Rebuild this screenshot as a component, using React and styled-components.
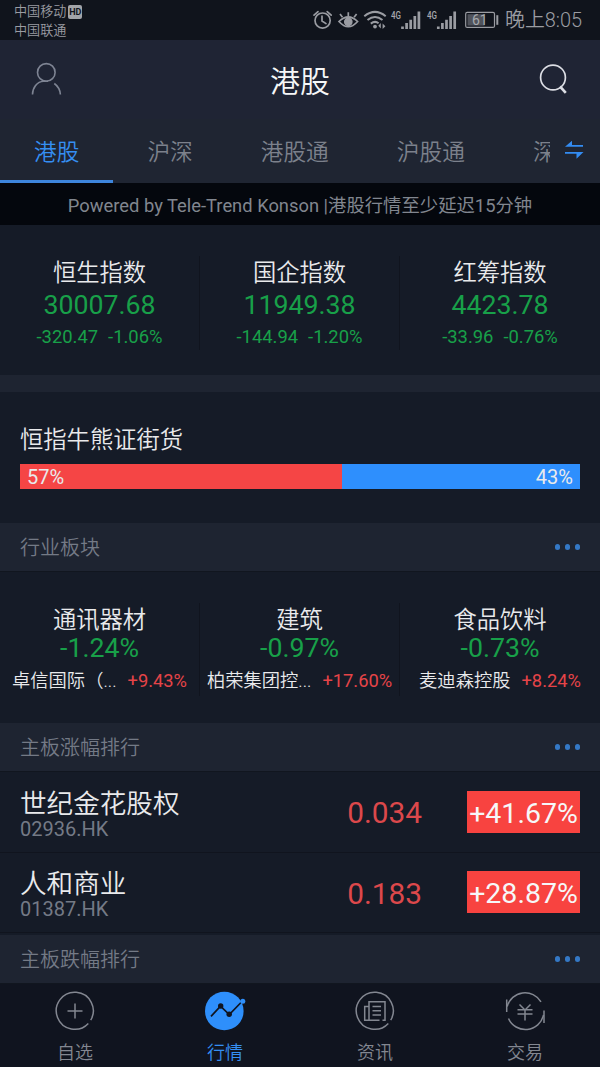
import styled, { createGlobalStyle } from 'styled-components';
import { useState } from 'react';


const indexes = [
    { name: '恒生指数', value: '30007.68', change: '-320.47', percent: '-1.06%' },
    { name: '国企指数', value: '11949.38', change: '-144.94', percent: '-1.20%' },
    { name: '红筹指数', value: '4423.78', change: '-33.96', percent: '-0.76%' },
];

const sectors = [
    { name: '通讯器材', percent: '-1.24%', stock: '卓信国际（...', gain: '+9.43%' },
    { name: '建筑', percent: '-0.97%', stock: '柏荣集团控...', gain: '+17.60%' },
    { name: '食品饮料', percent: '-0.73%', stock: '麦迪森控股', gain: '+8.24%' },
];

const stocks = [
    { name: '世纪金花股权', code: '02936.HK', price: '0.034', gain: '+41.67%' },
    { name: '人和商业', code: '01387.HK', price: '0.183', gain: '+28.87%' },
];

const tabs = ['港股', '沪深', '港股通', '沪股通', '深股通'];

const bull = 57.5;


const StatusIcons = () => (
    <svg width="200" height="40" viewBox="300 0 200 40" fill="none" stroke="#9a9ca2" strokeWidth="1.7">
        {/* alarm */}
        <circle cx="322.6" cy="20.6" r="7.6" />
        <path d="M322 16.2v4.8l4 2.6M314 15.2l4-3.6M331.200 15.200l-4-3.600" strokeLinecap="round" />
        {/* eye */}
        <path d="M339 21.500Q348.300 12.500 357.600 21.500Q348.300 32 339 21.500Z" />
        <circle cx="348.300" cy="21.800" r="3.500" fill="#9a9ca2" />
        <path d="M348.300 12.200v4M340 14l2.500 3.200M356.600 14l-2.500 3.200" />
        {/* wifi */}
        <path d="M364.300 16.200Q375 7.500 385.700 16.200M367.500 20Q375 14 382.500 20M370.800 23.600Q375 20.400 378.600 23.200" strokeWidth="2" />
        <circle cx="375" cy="26.600" r="1.900" fill="#9a9ca2" stroke="none" />
        <path d="M380.800 23v5.500l-2.500-2.800zM382.600 29v-5.500l2.800 2.800z" fill="#9a9ca2" stroke="none" />
        {/* signal bars */}
        {[401.200, 437].map((x) => (
            <path key={x} strokeWidth="2.700" d={`M${x + 1.300} 29v-2.500m4.100 2.500v-6m4.100 6v-9.300m4.100 9.300v-13m4.100 13v-17.500`} />
        ))}
        {/* battery */}
        <rect x="465.700" y="12.400" width="28.800" height="15" rx="1.500" strokeWidth="1.200" />
        <rect x="467.500" y="14.200" width="17" height="11.400" fill="#50535b" stroke="none" />
        <path d="M497.300 15.200v9.600" strokeWidth="2" />
        <g fill="#a6a8ad" stroke="none" fontFamily="Roboto, sans-serif">
            <text x="391" y="18.900" fontSize="11" fontWeight="500" textLength="10" lengthAdjust="spacingAndGlyphs">4G</text>
            <text x="427" y="18.900" fontSize="11" fontWeight="500" textLength="10" lengthAdjust="spacingAndGlyphs">4G</text>
            <text x="472" y="25.200" fontSize="14" fontWeight="400">61</text>
        </g>
    </svg>
);

const UserIcon = () => (
    <svg width="32" height="36" viewBox="0 0 32 36" fill="none" stroke="#7e8493" strokeWidth="1.600">
        <ellipse cx="16.300" cy="11.400" rx="8.800" ry="8.800" />
        <path d="M2.500 33.500C2.500 27 7 20.500 13.500 20.200H18M24.300 22.500Q29.900 26.500 30.400 33.500" />
    </svg>
);

const SearchIcon = () => (
    <svg width="30" height="34" viewBox="0 0 30 34" fill="none" stroke="#dcdee4">
        <circle cx="15" cy="15.500" r="12.400" strokeWidth="1.700" />
        <path d="M22 24.500l5.800 6.300" strokeWidth="2.600" />
    </svg>
);

const SwapIcon = () => (
    <svg width="20" height="20" viewBox="0 0 20 20" fill="#338cf2">
        <path d="M1 6.700L8 .8v4.100h11v1.800zM19.500 11.900L12.500 18.800v-5.100H1v-1.800z" />
    </svg>
);

const PlusIcon = () => (
    <svg width="44" height="44" viewBox="0 0 44 44" fill="none" stroke="#838791" strokeWidth="1.500">
        <path d="M35.300 34.400A18.500 18.500 0 1 1 37.700 31.200" />
        <path d="M22 14.500v15M14.500 22h15" />
    </svg>
);

const ChartIcon = () => (
    <svg width="44" height="44" viewBox="0 0 44 44">
        <circle cx="21.300" cy="22" r="19.300" fill="#2e8ffb" />
        <path d="M8 27.400L17.500 17.200L26.300 25.500L38 13.500" fill="none" stroke="#10141f" strokeWidth="1.700" />
        <circle cx="17.700" cy="17" r="2.700" fill="#10141f" />
        <circle cx="26.200" cy="25.300" r="2.700" fill="#10141f" />
        <circle cx="39.800" cy="12.200" r="2.500" fill="#2e8ffb" />
    </svg>
);

const NewsIcon = () => (
    <svg width="44" height="44" viewBox="0 0 44 44" fill="none" stroke="#838791" strokeWidth="1.500">
        <path d="M35.300 34.400A18.500 18.500 0 1 1 37.700 31.200" />
        <path d="M26.500 31.200H11.700V17.500H16M16 31V12.700H32V31.200H29.500M19.500 17.600H28M19.500 21.800H28M19.500 26H28" />
    </svg>
);

const TradeIcon = () => (
    <svg width="44" height="44" viewBox="0 0 44 44" fill="none" stroke="#838791" strokeWidth="1.500">
        <path d="M4.200 17.500A18.500 18.500 0 0 1 38 12.800M5.500 29.500A18.500 18.500 0 0 0 40.500 26" />
        <path d="M3.700 23V10.500M41 21.500V34" />
        <path d="M16.500 15.500L22 21L27.500 15.500M22 21V31.500M14.500 20.800H29.500M14.500 25H29.500" />
    </svg>
);

const navItems = [
    { label: '自选', icon: <PlusIcon /> },
    { label: '行情', icon: <ChartIcon /> },
    { label: '资讯', icon: <NewsIcon /> },
    { label: '交易', icon: <TradeIcon /> },
];


const Section = ({ title }) => (
    <SectionBar>
        <span>{title}</span>
        <Dots>
            <Dot />
            <Dot />
            <Dot />
        </Dots>
    </SectionBar>
);


const App = () => {

    const [tab, setTab] = useState('港股');
    const [page, setPage] = useState('行情');

    return (
        <Screen>
            <GlobalStyle />

            <StatusBar>
                <Carriers>
                    <Carrier>中国移动<HdBadge>HD</HdBadge></Carrier>
                    <Carrier>中国联通</Carrier>
                </Carriers>
                <StatusIcons />
                <Clock>晚上8:05</Clock>
            </StatusBar>

            <Header>
                <UserIcon />
                <Title>港股</Title>
                <SearchIcon />
            </Header>

            <TabBar>
                <TabList>
                    {tabs.map((name) => (
                        <Tab key={name} $active={name === tab} onClick={() => setTab(name)}>{name}</Tab>
                    ))}
                </TabList>
                <SwapBox><SwapIcon /></SwapBox>
            </TabBar>

            <Notice>Powered by Tele-Trend Konson |港股行情至少延迟15分钟</Notice>

            <IndexGrid>
                {indexes.map((item) => (
                    <Cell key={item.name}>
                        <CellName>{item.name}</CellName>
                        <IndexValue>{item.value}</IndexValue>
                        <IndexChange>
                            <span>{item.change}</span>
                            <span>{item.percent}</span>
                        </IndexChange>
                    </Cell>
                ))}
            </IndexGrid>

            <Divider />

            <BullBear>
                <BullBearTitle>恒指牛熊证街货</BullBearTitle>
                <Bar>
                    <Bull style={{ width: `${bull}%` }}>57%</Bull>
                    <Bear>43%</Bear>
                </Bar>
            </BullBear>

            <Section title="行业板块" />
            <SectorGrid>
                {sectors.map((item) => (
                    <Cell key={item.name}>
                        <CellName>{item.name}</CellName>
                        <SectorValue>{item.percent}</SectorValue>
                        <Leader>
                            <StockLabel>{item.stock}</StockLabel>
                            <Gain>{item.gain}</Gain>
                        </Leader>
                    </Cell>
                ))}
            </SectorGrid>

            <Section title="主板涨幅排行" />
            <StockList>
                {stocks.map((item) => (
                    <StockRow key={item.code}>
                        <div>
                            <StockName>{item.name}</StockName>
                            <StockCode>{item.code}</StockCode>
                        </div>
                        <Price>{item.price}</Price>
                        <Badge>{item.gain}</Badge>
                    </StockRow>
                ))}
            </StockList>

            <Section title="主板跌幅排行" />

            <BottomNav>
                {navItems.map((item) => (
                    <NavItem key={item.label} $active={item.label === page} onClick={() => setPage(item.label)}>
                        {item.icon}
                        <span>{item.label}</span>
                    </NavItem>
                ))}
            </BottomNav>
        </Screen>
    );
};


const GlobalStyle = createGlobalStyle`
    * {
        box-sizing: border-box;
    }

    body {
        margin: 0;
        background: #151b27;
    }
`;

const Screen = styled.div`
    display: flex;
    flex-direction: column;
    width: 600px;
    height: 1067px;
    overflow: hidden;
    background: #151b27;
    color: #e9eaec;
    font-family: Roboto, "Noto Sans CJK SC", sans-serif;
    font-weight: 400;
    white-space: nowrap;
`;

const StatusBar = styled.div`
    display: flex;
    flex: none;
    height: 40px;
    background: #10141c;
    color: #9a9ca2;
`;

const Carriers = styled.div`
    width: 300px;
    padding: 2px 0 0 14px;
`;

const Carrier = styled.div`
    display: flex;
    align-items: center;
    height: 19px;
    font-size: 13.1px;
    font-weight: 350;
    line-height: 19px;
`;

const HdBadge = styled.span`
    width: 14px;
    height: 14px;
    margin-left: 2px;
    border-radius: 2px;
    background: #a2a4a9;
    color: #10141c;
    font-size: 9px;
    font-weight: 700;
    line-height: 14px;
    text-align: center;
`;

const Clock = styled.div`
    padding-left: 5px;
    font-size: 19.900px;
    font-weight: 350;
    line-height: 42px;
`;

const Header = styled.div`
    display: flex;
    flex: none;
    height: 79px;
    align-items: center;
    justify-content: space-between;
    padding: 0 32px 1px 30px;
    background: #1f2434;
`;

const Title = styled.div`
    color: #f6f7f8;
    font-size: 30px;
    font-weight: 350;
    line-height: 40px;
    padding-top: 6px;
`;

const TabBar = styled.div`
    display: flex;
    flex: none;
    height: 64px;
    background: #1f2532;
`;

const TabList = styled.div`
    display: flex;
    width: 550px;
    overflow: hidden;
`;

const Tab = styled.div`
    flex: none;
    height: 64px;
    padding: 0 34px;
    border-bottom: 3px solid ${props => props.$active ? '#3d85dc' : 'transparent'};
    color: ${props => props.$active ? '#358ff3' : '#7c818c'};
    font-size: 22.700px;
    font-weight: 350;
    line-height: 67px;
    cursor: pointer;
`;

const SwapBox = styled.div`
    padding: 21px 0 0 14px;
`;

const Notice = styled.div`
    flex: none;
    height: 42px;
    background: #04070d;
    color: #81868f;
    font-size: 18.350px;
    line-height: 45px;
    text-align: center;
`;

const Grid = styled.div`
    display: grid;
    flex: none;
    grid-template-columns: repeat(3, 200px);
`;

const IndexGrid = styled(Grid)`
    height: 150px;
    padding: 31px 0 30px;
`;

const SectorGrid = styled(Grid)`
    height: 151px;
    padding: 31px 0;
`;

const Cell = styled.div`
    display: flex;
    flex-direction: column;
    align-items: center;
    min-width: 0;

    &:not(:last-child) {
        border-right: 1px solid #10141e;
    }
`;

const CellName = styled.div`
    height: 33px;
    font-size: 23.300px;
    font-weight: 350;
    line-height: 35px;
`;

const IndexValue = styled.div`
    height: 34px;
    color: #18a049;
    font-size: 26.700px;
    line-height: 33px;
`;

const IndexChange = styled.div`
    display: flex;
    gap: 10px;
    color: #18a049;
    font-size: 18.400px;
    line-height: 27px;
`;

const SectorValue = styled.div`
    height: 30px;
    color: #18a049;
    font-size: 26.700px;
    line-height: 25px;
`;

const Leader = styled.div`
    display: flex;
    gap: 11px;
    font-size: 18.300px;
    line-height: 30px;
`;

const StockLabel = styled.span`
    font-weight: 350;
`;

const Gain = styled.span`
    color: #e54448;
`;

const Divider = styled.div`
    flex: none;
    height: 17px;
    background: #1e2431;
`;

const BullBear = styled.div`
    flex: none;
    height: 131px;
    padding: 31px 20px 0;
`;

const BullBearTitle = styled.div`
    height: 41px;
    font-size: 23.300px;
    font-weight: 350;
    line-height: 34px;
`;

const Bar = styled.div`
    display: flex;
    height: 25px;
    font-size: 20px;
    line-height: 26px;
`;

const Bull = styled.div`
    padding-left: 7px;
    background: #f54545;
`;

const Bear = styled.div`
    flex: 1;
    padding-right: 7px;
    background: #2e8ffd;
    text-align: right;
`;

const SectionBar = styled.div`
    display: flex;
    flex: none;
    height: 49px;
    align-items: center;
    justify-content: space-between;
    padding: 0 20px;
    border-bottom: 1px solid #11161f;
    background: #1e2431;
    color: #747a86;
    font-size: 20px;
    font-weight: 350;
    line-height: 28px;

    span {
        padding-top: 2px;
    }
`;

const Dots = styled.div`
    display: flex;
    gap: 4.600px;
`;

const Dot = styled.i`
    width: 5.400px;
    height: 5.400px;
    border-radius: 50%;
    background: #3478c5;
`;

const StockList = styled.div`
    flex: none;
    height: 163px;
    padding-bottom: 1px;
`;

const StockRow = styled.div`
    display: grid;
    grid-template-columns: 1fr 75px 113px;
    column-gap: 45px;
    align-items: center;
    height: 80.500px;
    padding: 0 20px;
    border-bottom: 1px solid #10141e;
`;

const StockName = styled.div`
    padding-top: 3px;
    font-size: 26.600px;
    font-weight: 350;
    line-height: 31px;
`;

const StockCode = styled.div`
    color: #747a86;
    font-size: 20px;
    line-height: 20px;
`;

const Price = styled.div`
    padding-top: 3px;
    color: #dc484b;
    font-size: 29.800px;
    line-height: 42px;
    text-align: right;
`;

const Badge = styled.div`
    height: 42px;
    background: #f84340;
    color: #f6f7f8;
    font-size: 28.500px;
    line-height: 45px;
    text-align: center;
`;

const BottomNav = styled.div`
    display: grid;
    flex: 1;
    grid-template-columns: repeat(4, 150px);
    background: #10141f;
`;

const NavItem = styled.div`
    display: flex;
    flex-direction: column;
    align-items: center;
    padding-top: 5px;
    color: ${props => props.$active ? '#358ff3' : '#838791'};
    font-size: 18px;
    font-weight: 350;
    line-height: 40px;
    cursor: pointer;
`;

export default App;
